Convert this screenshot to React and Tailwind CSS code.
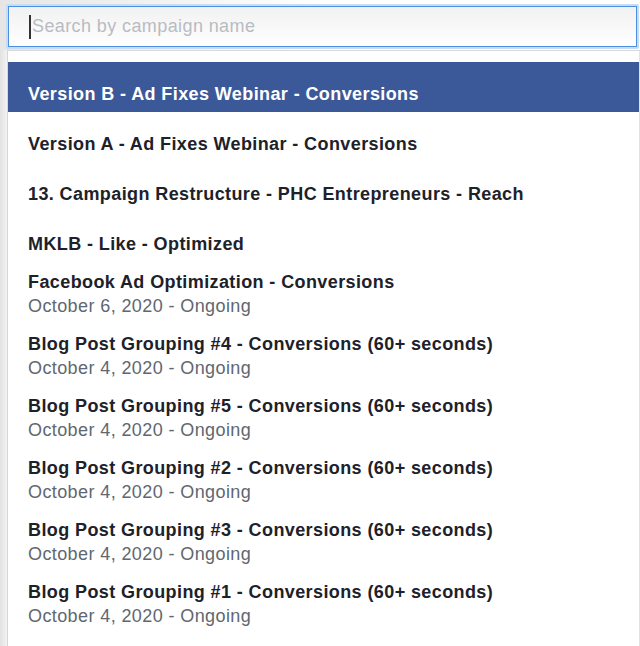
import React, { useState } from 'react';

const campaigns = [
  { name: 'Version B - Ad Fixes Webinar - Conversions', selected: true },
  { name: 'Version A - Ad Fixes Webinar - Conversions' },
  { name: '13. Campaign Restructure - PHC Entrepreneurs - Reach' },
  { name: 'MKLB - Like - Optimized' },
  { name: 'Facebook Ad Optimization - Conversions', date: 'October 6, 2020 - Ongoing' },
  { name: 'Blog Post Grouping #4 - Conversions (60+ seconds)', date: 'October 4, 2020 - Ongoing' },
  { name: 'Blog Post Grouping #5 - Conversions (60+ seconds)', date: 'October 4, 2020 - Ongoing' },
  { name: 'Blog Post Grouping #2 - Conversions (60+ seconds)', date: 'October 4, 2020 - Ongoing' },
  { name: 'Blog Post Grouping #3 - Conversions (60+ seconds)', date: 'October 4, 2020 - Ongoing' },
  { name: 'Blog Post Grouping #1 - Conversions (60+ seconds)', date: 'October 4, 2020 - Ongoing' },
];

const Row = ({ item }) => {
  if (!item.date) {
    return (
      <div
        className={`h-[50px] pt-[20px] pl-[20px] ${item.selected ? 'bg-[#3b5998] text-white' : 'text-[#1d2129]'}`}
      >
        <div className="text-[18px] leading-[24px] font-bold tracking-[0.4px]">{item.name}</div>
      </div>
    );
  }
  return (
    <div className="h-[62px] pt-[8px] pl-[20px] tracking-[0.4px]">
      <div className="text-[18px] leading-[24px] font-bold text-[#1d2129]">{item.name}</div>
      <div className="text-[18px] leading-[25px] text-[#606770]">{item.date}</div>
    </div>
  );
};

const App = () => {
  const [query, setQuery] = useState('');

  return (
    <div
      className="w-[640px] h-[646px] overflow-hidden bg-white flex flex-col"
      style={{ fontFamily: '"Liberation Sans", Arial, sans-serif' }}
    >
      <div className="h-[50px] pt-[4px] pl-[6px] pr-[1px] bg-gradient-to-r from-[#e6e6e6] via-white to-white">
        <div className="h-[45px] rounded-[2px] border-2 border-[#c9dcf3] bg-white">
          <div className="h-full border border-[#4a8fe0] bg-gradient-to-b from-[#f1f1f1] to-white flex items-center pl-[20px]">
            <span className="w-[2px] h-[24px] bg-[#333]" />
            <input
              value={query}
              onChange={(e) => setQuery(e.target.value)}
              placeholder="Search by campaign name"
              className="flex-1 bg-transparent outline-none text-[18px] tracking-[0.4px] text-[#1d2129] placeholder:text-[#b8bcc2] pl-[1px]"
            />
          </div>
        </div>
      </div>
      <div className="flex flex-1">
        <div className="w-[8px] bg-gradient-to-r from-[#e2e2e2] to-[#f3f3f3] border-r border-[#d6d6d6]" />
        <div className="flex-1 border-t border-[#d9d9d9] border-r border-r-[#e2e2e2] pt-[11px]">
          {campaigns.map((c) => (
            <Row key={c.name} item={c} />
          ))}
        </div>
      </div>
    </div>
  );
};

export default App;
